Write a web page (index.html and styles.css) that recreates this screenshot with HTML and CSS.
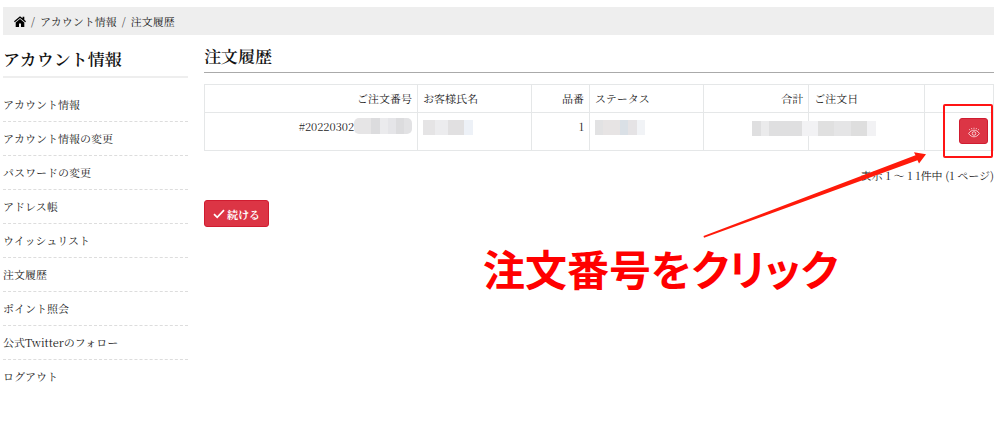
FILE: index.html
```
<!DOCTYPE html>
<html lang="ja">
<head>
    <meta charset="UTF-8">
    <meta name="viewport" content="width=device-width, initial-scale=1.0">
    <title>注文履歴</title>
    <link rel="stylesheet" href="styles.css">
</head>
<body>

<nav class="breadcrumb">
    <a href="#" aria-label="ホーム">
        <svg class="home" viewBox="0 0 12 11"><path d="M6 .2 0 5.200l.8 1L6 2l5.200 4.200.8-1-1.700-1.500V.8H8.600v1.500zM6 3 1.700 6.400V11H5V7.600h2V11h3.300V6.400z"/></svg>
    </a>
    <span>/</span>
    <a href="#">アカウント情報</a>
    <span>/</span>
    <a href="#">注文履歴</a>
</nav>

<div class="container">
    <aside class="sidebar">
        <h2>アカウント情報</h2>
        <ul>
            <li><a href="#">アカウント情報</a></li>
            <li><a href="#">アカウント情報の変更</a></li>
            <li><a href="#">パスワードの変更</a></li>
            <li><a href="#">アドレス帳</a></li>
            <li><a href="#">ウイッシュリスト</a></li>
            <li><a href="#">注文履歴</a></li>
            <li><a href="#">ポイント照会</a></li>
            <li><a href="#">公式Twitterのフォロー</a></li>
            <li><a href="#">ログアウト</a></li>
        </ul>
    </aside>

    <main class="content">
        <h1>注文履歴</h1>
        <table class="orders">
            <colgroup>
                <col class="col-number"><col class="col-name"><col class="col-count"><col class="col-status">
                <col class="col-total"><col class="col-date"><col class="col-action">
            </colgroup>
            <thead>
                <tr>
                    <th class="right">ご注文番号</th>
                    <th>お客様氏名</th>
                    <th class="right">品番</th>
                    <th>ステータス</th>
                    <th class="right">合計</th>
                    <th>ご注文日</th>
                    <th></th>
                </tr>
            </thead>
            <tbody>
                <tr>
                    <td class="right">#20220302<span class="mask mask-number"></span></td>
                    <td><span class="mask mask-name"></span></td>
                    <td class="right">1</td>
                    <td><span class="mask mask-status"></span></td>
                    <td></td>
                    <td class="date"><span class="mask mask-date"></span></td>
                    <td class="right action">
                        <button class="view" aria-label="表示">
                            <svg viewBox="0 0 12 11" fill="none" stroke="#fff" stroke-width=".7"><path d="M.6 6.500C2.300 4.100 4 3.200 6 3.200s3.700.9 5.400 3.300C9.700 8.900 8 9.800 6 9.800S2.300 8.900.6 6.500z"/><circle cx="6" cy="6.500" r="1.800"/><path d="M6 1.900V.7M3.800 2.200 3.500 1.100M8.200 2.200l.3-1.100M1.900 3.200 1.300 2.200M10.100 3.200l.6-1"/></svg>
                        </button>
                        <span class="highlight"></span>
                    </td>
                </tr>
            </tbody>
        </table>
        <p class="paging">表示 1 ～ 1 1件中 (1 ページ)</p>
        <button class="continue">
            <svg viewBox="0 0 12 10" fill="none" stroke="#fff" stroke-width="1.700"><path d="M1 5.200 4.200 8.400 11 1.200"/></svg>続ける
        </button>

        <div class="note">
            <svg viewBox="0 0 224 86"><path fill="#ff1a0a" d="M1.500 84 213.500 3.200 212 .2 224 2.200 217 11.500 215.500 8.200 2 85.800z"/></svg>
            <p>注文番号をクリック</p>
        </div>
    </main>
</div>

</body>
</html>
```

FILE: styles.css
```
* {
    box-sizing: border-box;
}
body {
    margin: 7px 6px 0 3px;
    font-family: "Noto Serif JP", "Noto Serif CJK JP", "Liberation Serif", "Noto Sans CJK JP", serif;
    font-size: 11px;
    line-height: 16px;
    color: #222;
    background: #fff;
}
a {
    color: inherit;
    text-decoration: none;
}
h1, h2 {
    margin: 0;
    font-size: 17px;
    line-height: 24px;
    font-weight: 600;
    color: #111;
}
.breadcrumb {
    display: flex;
    align-items: center;
    gap: 5px;
    height: 28px;
    padding: 0 11px;
    background: #eee;
}
.home {
    display: block;
    width: 12px;
    height: 11px;
    fill: #000;
}
.container {
    display: flex;
    gap: 16px;
}
.sidebar {
    flex: 0 0 185px;
    padding-top: 12px;
}
.sidebar h2 {
    padding-bottom: 5px;
    border-bottom: 2px solid #eee;
}
.sidebar ul {
    margin: 10px 0 0;
    padding: 0;
    list-style: none;
}
.sidebar li {
    padding: 8px 0 9px;
    border-bottom: 1px dashed #ddd;
}
.sidebar li:last-child {
    border-bottom: none;
}
.content {
    position: relative;
    flex: 1;
    min-width: 0;
    padding-top: 9px;
}
.content h1 {
    padding-bottom: 4px;
    border-bottom: 1px solid #aaa;
}
.orders {
    width: 100%;
    margin-top: 11px;
    table-layout: fixed;
    border-collapse: collapse;
}
.col-number { width: 27%; }
.col-name { width: 14.5%; }
.col-count { width: 7.3%; }
.col-status { width: 14.5%; }
.col-total { width: 13.3%; }
.col-date { width: 14.7%; }
.col-action { width: 8.7%; }
.orders th,
.orders td {
    padding: 5px 5px 6px;
    border: 1px solid #e5e7e8;
    font-weight: normal;
    text-align: left;
    vertical-align: top;
}
.orders .right {
    text-align: right;
}
.orders td.date,
.orders td.action {
    position: relative;
}
.mask {
    display: inline-block;
    width: 50px;
    height: 15px;
    margin-top: 2px;
    vertical-align: top;
}
.mask-number {
    width: 58px;
    height: 16px;
    margin-top: 0;
    border-radius: 5px;
    background: linear-gradient(to right, #e6e5e6 30%, #dcdcde 30% 44%, #ebebed 44% 58%, #e5e5e8 58% 72%, #dcdcde 72% 86%, #e2e2e4 86%);
}
.mask-name {
    background: linear-gradient(to right, #e5e4e5 25%, #ececee 25% 50%, #e1e0e1 50% 83%, #edf1f7 83%);
}
.mask-status {
    background: linear-gradient(to right, #e2e2e3 15%, #e7e4e4 15% 50%, #dae0e6 50% 66%, #e5e3e5 66% 83%, #f1f3f6 83%);
}
/* runs across the border between total and date */
.mask-date {
    position: absolute;
    left: -57px;
    top: 6px;
    width: 124px;
    background: linear-gradient(to right, #dfdfe0 7%, #ebebec 7% 14%, #dfdfe0 14% 40%, #f2f2f4 40% 53%, #e0e0e0 53% 66%, #e5e5e6 66% 80%, #dedede 80% 93%, #f2f2f4 93%);
}
button {
    font-family: inherit;
    color: #fff;
    background: #dc3545;
    border: 1px solid #d01c30;
    border-radius: 3px;
    cursor: pointer;
}
.view {
    display: inline-flex;
    align-items: center;
    justify-content: center;
    width: 29px;
    height: 26px;
    padding: 3px 0 0;
    vertical-align: top;
}
.view svg {
    width: 12px;
    height: 11px;
}
.paging {
    margin: 16px 0 17px;
    text-align: right;
}
.continue {
    display: flex;
    align-items: center;
    gap: 2px;
    height: 27px;
    padding: 0 8px;
    font-size: 11px;
    font-weight: bold;
}
.continue svg {
    width: 12px;
    height: 10px;
}
/* red guide marks drawn over the page */
.highlight {
    position: absolute;
    top: -9px;
    right: 0;
    width: 50px;
    height: 54px;
    border: 2px solid #ff1414;
    border-radius: 2px;
}
.note {
    position: absolute;
    top: 117px;
    right: 68px;
}
.note svg {
    display: block;
    width: 224px;
    height: 86px;
    margin-left: auto;
}
.note p {
    margin: 2px 88px 0 0;
    font-family: "Noto Sans CJK JP", sans-serif;
    font-size: 42px;
    line-height: 56px;
    font-weight: bold;
    font-feature-settings: "palt";
    white-space: nowrap;
    color: #f00;
}
```
